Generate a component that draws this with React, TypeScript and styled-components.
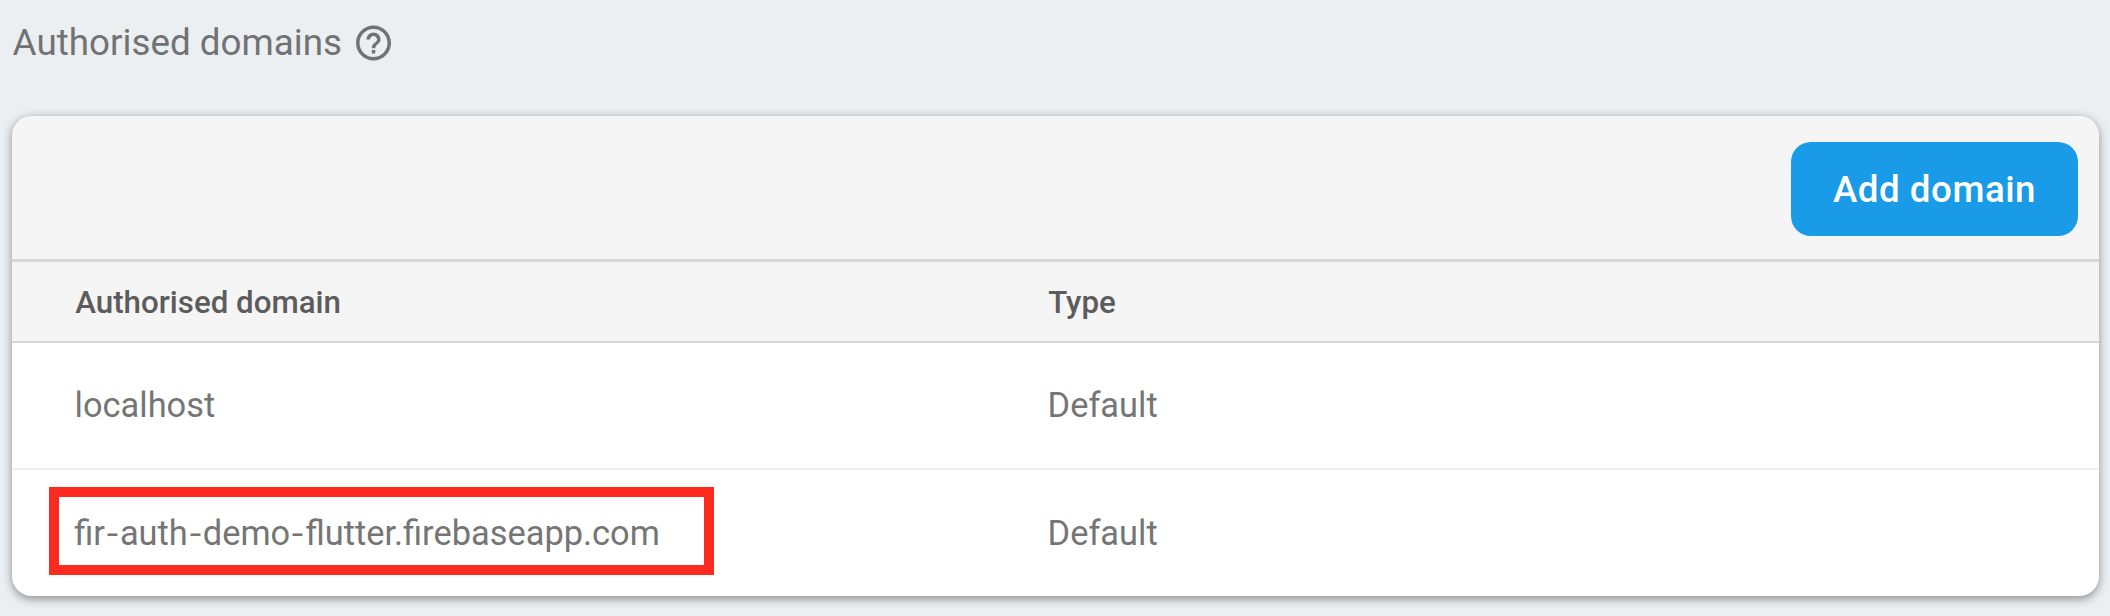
import React, { Fragment } from "react";
import styled, { createGlobalStyle } from "styled-components";

const GlobalStyle = createGlobalStyle`
  * { box-sizing: border-box; }
  body {
    margin: 0;
    background: #ebeff2;
    font-family: Roboto, "Liberation Sans", sans-serif;
  }
`;

const Page = styled.main`
  height: 616px;
  padding: 0 11px 20px 12px;
  overflow: hidden;
`;

const SectionHeader = styled.header`
  display: flex;
  align-items: flex-start;
  height: 116px;
`;

const Title = styled.h1`
  width: 340px;
  margin: 0;
  padding: 22px 0 0 0.6px;
  font-size: 36.8px;
  line-height: 42px;
  font-weight: 400;
  color: #717273;
  white-space: nowrap;
`;

const HelpIcon = styled.svg`
  width: 42px;
  height: 42px;
  margin-top: 22px;
  fill: #717273;
`;

const Card = styled.section`
  height: 480px;
  border-radius: 20px;
  background: #fff;
  box-shadow: 0 2.4px 9.5px rgba(0, 0, 0, 0.4);
`;

const Toolbar = styled.div`
  display: flex;
  justify-content: flex-end;
  height: 146px;
  padding: 26px 21px 0 0;
  border-bottom: 3px solid #d7d7d7;
  border-radius: 20px 20px 0 0;
  background: #f5f5f5;
`;

const AddButton = styled.button`
  width: 287px;
  height: 94px;
  padding: 2px 0 0;
  border: 0;
  border-radius: 20px;
  background: #1a9be7;
  color: #fff;
  font: 500 36.7px/92px Roboto, "Liberation Sans", sans-serif;
  letter-spacing: 0.52px;
  white-space: nowrap;
`;

const Row = styled.div`
  display: grid;
  grid-template-columns: 973px 1fr;
  align-items: center;
  height: 127px;
  padding: 0 0 2px 62.6px;
  border-bottom: 2px solid #efefef;
  color: #757575;
  font-size: 34.4px;
  line-height: 40px;

  &:last-child {
    height: 126px;
    padding-bottom: 0;
    border-bottom: 0;
  }
`;

const HeadRow = styled(Row)`
  height: 81px;
  padding: 2px 0 0 63.2px;
  border-bottom-color: #d7d7d7;
  background: #f5f5f5;
  color: #5c5c5c;
  font-size: 31.3px;
  font-weight: 500;
`;

const Cell = styled.span`
  white-space: nowrap;
`;

const Highlight = styled.span`
  display: flex;
  align-items: center;
  width: 665px;
  height: 88px;
  margin: 0 0 4px -25.6px;
  padding: 3px 0 0 15.2px;
  border: 10px solid #fd2b1f;
  white-space: nowrap;
`;

const Hyphen = styled.span`
  display: inline-block;
  width: 15px;
  text-align: center;
  transform: scaleX(1.2);
`;

function DomainName({ name }: { name: string }) {
  return (
    <Cell>
      {name.split("-").map((part, i) => (
        <Fragment key={i}>
          {i > 0 && <Hyphen>-</Hyphen>}
          {part}
        </Fragment>
      ))}
    </Cell>
  );
}

const domains = [
  { name: "localhost", type: "Default", marked: false },
  { name: "fir-auth-demo-flutter.firebaseapp.com", type: "Default", marked: true },
];

export default function App() {
  return (
    <>
      <GlobalStyle />
      <Page>
        <SectionHeader>
          <Title>Authorised domains</Title>
          <HelpIcon viewBox="-0.3 0 24 24" aria-label="Help">
            <path d="M11 18h2v-2h-2v2zm1-16C6.48 2 2 6.48 2 12s4.48 10 10 10 10-4.48 10-10S17.52 2 12 2zm0 18c-4.41 0-8-3.59-8-8s3.59-8 8-8 8 3.59 8 8-3.59 8-8 8zm0-14c-2.21 0-4 1.79-4 4h2c0-1.1.9-2 2-2s2 .9 2 2c0 2-3 1.75-3 5h2c0-2.25 3-2.5 3-5 0-2.21-1.79-4-4-4z" />
          </HelpIcon>
        </SectionHeader>
        <Card>
          <Toolbar>
            <AddButton>Add domain</AddButton>
          </Toolbar>
          <HeadRow>
            <Cell>Authorised domain</Cell>
            <Cell>Type</Cell>
          </HeadRow>
          {domains.map((d) => (
            <Row key={d.name}>
              {d.marked ? (
                <Highlight>
                  <DomainName name={d.name} />
                </Highlight>
              ) : (
                <Cell>{d.name}</Cell>
              )}
              <Cell>{d.type}</Cell>
            </Row>
          ))}
        </Card>
      </Page>
    </>
  );
}
